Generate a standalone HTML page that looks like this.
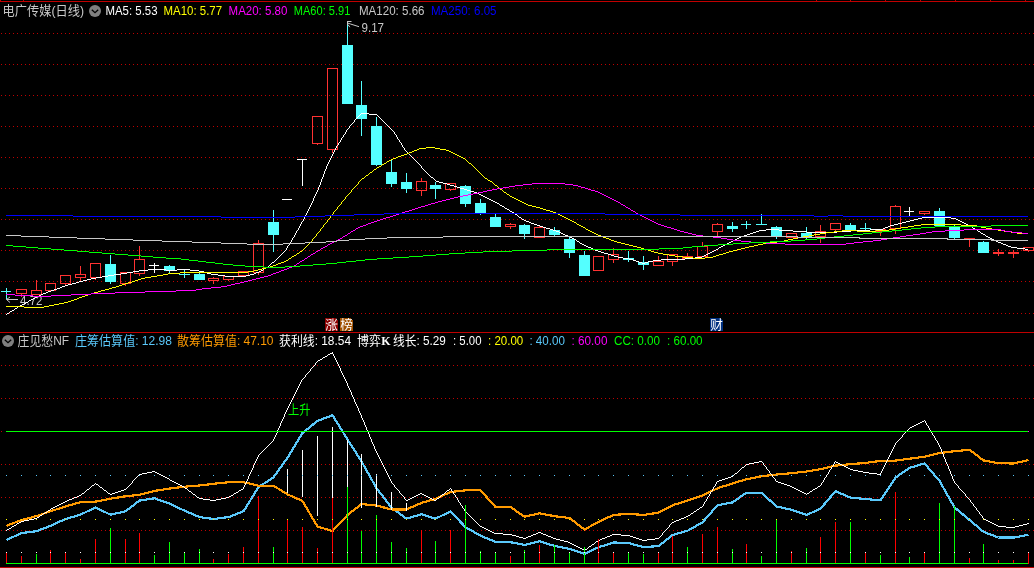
<!DOCTYPE html>
<html lang="zh-CN">
<head>
<meta charset="utf-8">
<title>电广传媒(日线)</title>
<style>
html,body{margin:0;padding:0;background:#000;overflow:hidden}
body{width:1034px;height:568px}
svg{display:block;will-change:transform}
text{font-family:"Liberation Sans","Noto Sans CJK SC",sans-serif;font-size:12.6px;font-weight:400}
.cj{font-family:"Liberation Sans","Noto Sans CJK SC",sans-serif}
.k{font-family:"Liberation Serif",serif;font-weight:700}
</style>
</head>
<body>
<svg width="1034" height="568" viewBox="0 0 1034 568" shape-rendering="crispEdges">
<rect x="0" y="0" width="1034" height="568" fill="#000"/>
<rect x="0" y="1" width="1034" height="1" fill="#c00000"/>
<rect x="0" y="0" width="1" height="1" fill="#c00000"/>
<rect x="23" y="0" width="1" height="1" fill="#c00000"/>
<rect x="816" y="0" width="1" height="1" fill="#c00000"/>
<rect x="850" y="0" width="1" height="1" fill="#c00000"/>
<rect x="885" y="0" width="1" height="1" fill="#c00000"/>
<rect x="920" y="0" width="1" height="1" fill="#c00000"/>
<rect x="955" y="0" width="1" height="1" fill="#c00000"/>
<rect x="990" y="0" width="1" height="1" fill="#c00000"/>
<rect x="1025" y="0" width="1" height="1" fill="#c00000"/>
<rect x="0" y="332" width="1034" height="1" fill="#c00000"/>
<rect x="0" y="567" width="1034" height="1" fill="#c00000"/>
<line x1="1" y1="33.5" x2="1034" y2="33.5" stroke="#c00000" stroke-width="1" stroke-dasharray="1 3"/>
<line x1="1" y1="64.5" x2="1034" y2="64.5" stroke="#c00000" stroke-width="1" stroke-dasharray="1 3"/>
<line x1="1" y1="95.5" x2="1034" y2="95.5" stroke="#c00000" stroke-width="1" stroke-dasharray="1 3"/>
<line x1="1" y1="126.5" x2="1034" y2="126.5" stroke="#c00000" stroke-width="1" stroke-dasharray="1 3"/>
<line x1="1" y1="157.5" x2="1034" y2="157.5" stroke="#c00000" stroke-width="1" stroke-dasharray="1 3"/>
<line x1="1" y1="188.5" x2="1034" y2="188.5" stroke="#c00000" stroke-width="1" stroke-dasharray="1 3"/>
<line x1="1" y1="219.5" x2="1034" y2="219.5" stroke="#c00000" stroke-width="1" stroke-dasharray="1 3"/>
<line x1="1" y1="250.5" x2="1034" y2="250.5" stroke="#c00000" stroke-width="1" stroke-dasharray="1 3"/>
<line x1="1" y1="281.5" x2="1034" y2="281.5" stroke="#c00000" stroke-width="1" stroke-dasharray="1 3"/>
<line x1="1" y1="313.5" x2="1034" y2="313.5" stroke="#c00000" stroke-width="1" stroke-dasharray="1 3"/>
<line x1="1" y1="365.5" x2="1034" y2="365.5" stroke="#c00000" stroke-width="1" stroke-dasharray="1 3"/>
<line x1="1" y1="398.5" x2="1034" y2="398.5" stroke="#c00000" stroke-width="1" stroke-dasharray="1 3"/>
<line x1="1" y1="464.5" x2="1034" y2="464.5" stroke="#c00000" stroke-width="1" stroke-dasharray="1 3"/>
<line x1="1" y1="497.5" x2="1034" y2="497.5" stroke="#c00000" stroke-width="1" stroke-dasharray="1 3"/>
<line x1="1" y1="530.5" x2="1034" y2="530.5" stroke="#c00000" stroke-width="1" stroke-dasharray="1 3"/>
<rect x="6" y="288" width="1" height="11" fill="#54ffff"/>
<rect x="1" y="291" width="10" height="1" fill="#54ffff"/>
<rect x="21" y="293" width="1" height="4" fill="#ff3232"/>
<rect x="16.5" y="289.5" width="10" height="4" fill="none" stroke="#ff3232" stroke-width="1"/>
<rect x="36" y="280" width="1" height="11" fill="#ff3232"/>
<rect x="31.5" y="290.5" width="10" height="4" fill="none" stroke="#ff3232" stroke-width="1"/>
<rect x="45.5" y="283.5" width="10" height="7" fill="none" stroke="#ff3232" stroke-width="1"/>
<rect x="65" y="283" width="1" height="2" fill="#ff3232"/>
<rect x="60.5" y="275.5" width="10" height="8" fill="none" stroke="#ff3232" stroke-width="1"/>
<rect x="80" y="266" width="1" height="9" fill="#ff3232"/>
<rect x="80" y="277" width="1" height="4" fill="#ff3232"/>
<rect x="75.5" y="274.5" width="10" height="3" fill="none" stroke="#ff3232" stroke-width="1"/>
<rect x="95" y="277" width="1" height="3" fill="#ff3232"/>
<rect x="90.5" y="263.5" width="10" height="14" fill="none" stroke="#ff3232" stroke-width="1"/>
<rect x="110" y="255" width="1" height="29" fill="#54ffff"/>
<rect x="105" y="264" width="11" height="18" fill="#54ffff"/>
<rect x="125" y="283" width="1" height="3" fill="#ff3232"/>
<rect x="120.5" y="272.5" width="10" height="11" fill="none" stroke="#ff3232" stroke-width="1"/>
<rect x="139" y="246" width="1" height="14" fill="#ff3232"/>
<rect x="139" y="273" width="1" height="3" fill="#ff3232"/>
<rect x="134.5" y="259.5" width="10" height="14" fill="none" stroke="#ff3232" stroke-width="1"/>
<rect x="154" y="263" width="1" height="10" fill="#ffffff"/>
<rect x="149" y="265" width="10" height="1" fill="#ffffff"/>
<rect x="169" y="265" width="1" height="9" fill="#54ffff"/>
<rect x="164" y="266" width="11" height="5" fill="#54ffff"/>
<rect x="184" y="270" width="1" height="8" fill="#54ffff"/>
<rect x="179" y="274" width="11" height="1" fill="#54ffff"/>
<rect x="199" y="271" width="1" height="9" fill="#54ffff"/>
<rect x="194" y="274" width="11" height="6" fill="#54ffff"/>
<rect x="213" y="277" width="1" height="2" fill="#ff3232"/>
<rect x="213" y="280" width="1" height="4" fill="#ff3232"/>
<rect x="208.5" y="278.5" width="10" height="2" fill="none" stroke="#ff3232" stroke-width="1"/>
<rect x="228" y="279" width="1" height="2" fill="#ff3232"/>
<rect x="223.5" y="276.5" width="10" height="3" fill="none" stroke="#ff3232" stroke-width="1"/>
<rect x="238.5" y="271.5" width="10" height="4" fill="none" stroke="#ff3232" stroke-width="1"/>
<rect x="258" y="240" width="1" height="4" fill="#ff3232"/>
<rect x="258" y="272" width="1" height="3" fill="#ff3232"/>
<rect x="253.5" y="243.5" width="10" height="29" fill="none" stroke="#ff3232" stroke-width="1"/>
<rect x="273" y="210" width="1" height="42" fill="#54ffff"/>
<rect x="268" y="222" width="11" height="13" fill="#54ffff"/>
<rect x="287" y="199" width="1" height="1" fill="#ffffff"/>
<rect x="282" y="199" width="10" height="1" fill="#ffffff"/>
<rect x="302" y="159" width="1" height="27" fill="#ffffff"/>
<rect x="297" y="159" width="10" height="1" fill="#ffffff"/>
<rect x="317" y="143" width="1" height="2" fill="#ff3232"/>
<rect x="312.5" y="116.5" width="10" height="27" fill="none" stroke="#ff3232" stroke-width="1"/>
<rect x="332" y="149" width="1" height="4" fill="#ff3232"/>
<rect x="327.5" y="68.5" width="10" height="81" fill="none" stroke="#ff3232" stroke-width="1"/>
<rect x="347" y="25" width="1" height="79" fill="#54ffff"/>
<rect x="342" y="45" width="11" height="59" fill="#54ffff"/>
<rect x="361" y="81" width="1" height="55" fill="#54ffff"/>
<rect x="356" y="105" width="11" height="14" fill="#54ffff"/>
<rect x="376" y="117" width="1" height="49" fill="#54ffff"/>
<rect x="371" y="126" width="11" height="39" fill="#54ffff"/>
<rect x="391" y="160" width="1" height="27" fill="#54ffff"/>
<rect x="386" y="172" width="11" height="12" fill="#54ffff"/>
<rect x="406" y="173" width="1" height="20" fill="#54ffff"/>
<rect x="401" y="182" width="11" height="7" fill="#54ffff"/>
<rect x="421" y="178" width="1" height="4" fill="#ff3232"/>
<rect x="421" y="190" width="1" height="6" fill="#ff3232"/>
<rect x="416.5" y="181.5" width="10" height="9" fill="none" stroke="#ff3232" stroke-width="1"/>
<rect x="435" y="182" width="1" height="17" fill="#54ffff"/>
<rect x="430" y="185" width="11" height="4" fill="#54ffff"/>
<rect x="450" y="189" width="1" height="2" fill="#ff3232"/>
<rect x="445.5" y="183.5" width="10" height="6" fill="none" stroke="#ff3232" stroke-width="1"/>
<rect x="465" y="185" width="1" height="22" fill="#54ffff"/>
<rect x="460" y="186" width="11" height="18" fill="#54ffff"/>
<rect x="480" y="199" width="1" height="16" fill="#54ffff"/>
<rect x="475" y="203" width="11" height="10" fill="#54ffff"/>
<rect x="495" y="214" width="1" height="13" fill="#54ffff"/>
<rect x="490" y="217" width="11" height="10" fill="#54ffff"/>
<rect x="510" y="223" width="1" height="2" fill="#ff3232"/>
<rect x="510" y="226" width="1" height="3" fill="#ff3232"/>
<rect x="505.5" y="224.5" width="10" height="2" fill="none" stroke="#ff3232" stroke-width="1"/>
<rect x="524" y="224" width="1" height="15" fill="#54ffff"/>
<rect x="519" y="225" width="11" height="9" fill="#54ffff"/>
<rect x="539" y="225" width="1" height="3" fill="#ff3232"/>
<rect x="534.5" y="227.5" width="10" height="10" fill="none" stroke="#ff3232" stroke-width="1"/>
<rect x="554" y="227" width="1" height="10" fill="#54ffff"/>
<rect x="549" y="230" width="11" height="5" fill="#54ffff"/>
<rect x="569" y="237" width="1" height="21" fill="#54ffff"/>
<rect x="564" y="239" width="11" height="14" fill="#54ffff"/>
<rect x="584" y="251" width="1" height="25" fill="#54ffff"/>
<rect x="579" y="255" width="11" height="21" fill="#54ffff"/>
<rect x="593.5" y="256.5" width="10" height="14" fill="none" stroke="#ff3232" stroke-width="1"/>
<rect x="613" y="248" width="1" height="7" fill="#ff3232"/>
<rect x="613" y="259" width="1" height="4" fill="#ff3232"/>
<rect x="608.5" y="254.5" width="10" height="5" fill="none" stroke="#ff3232" stroke-width="1"/>
<rect x="628" y="251" width="1" height="11" fill="#54ffff"/>
<rect x="623" y="258" width="11" height="2" fill="#54ffff"/>
<rect x="643" y="256" width="1" height="14" fill="#54ffff"/>
<rect x="638" y="262" width="11" height="3" fill="#54ffff"/>
<rect x="658" y="256" width="1" height="6" fill="#ff3232"/>
<rect x="653.5" y="261.5" width="10" height="4" fill="none" stroke="#ff3232" stroke-width="1"/>
<rect x="672" y="261" width="1" height="5" fill="#ff3232"/>
<rect x="667.5" y="254.5" width="10" height="7" fill="none" stroke="#ff3232" stroke-width="1"/>
<rect x="687" y="253" width="1" height="4" fill="#ff3232"/>
<rect x="682.5" y="256.5" width="10" height="2" fill="none" stroke="#ff3232" stroke-width="1"/>
<rect x="702" y="242" width="1" height="5" fill="#ff3232"/>
<rect x="697.5" y="246.5" width="10" height="10" fill="none" stroke="#ff3232" stroke-width="1"/>
<rect x="717" y="223" width="1" height="2" fill="#ff3232"/>
<rect x="717" y="231" width="1" height="5" fill="#ff3232"/>
<rect x="712.5" y="224.5" width="10" height="7" fill="none" stroke="#ff3232" stroke-width="1"/>
<rect x="732" y="222" width="1" height="10" fill="#54ffff"/>
<rect x="727" y="226" width="11" height="3" fill="#54ffff"/>
<rect x="746" y="221" width="1" height="8" fill="#54ffff"/>
<rect x="741" y="224" width="10" height="1" fill="#54ffff"/>
<rect x="761" y="214" width="1" height="11" fill="#54ffff"/>
<rect x="756" y="224" width="11" height="1" fill="#54ffff"/>
<rect x="776" y="226" width="1" height="13" fill="#54ffff"/>
<rect x="771" y="227" width="11" height="9" fill="#54ffff"/>
<rect x="786.5" y="233.5" width="10" height="4" fill="none" stroke="#ff3232" stroke-width="1"/>
<rect x="806" y="227" width="1" height="13" fill="#54ffff"/>
<rect x="801" y="233" width="11" height="5" fill="#54ffff"/>
<rect x="820" y="225" width="1" height="7" fill="#ff3232"/>
<rect x="820" y="236" width="1" height="7" fill="#ff3232"/>
<rect x="815.5" y="231.5" width="10" height="5" fill="none" stroke="#ff3232" stroke-width="1"/>
<rect x="835" y="229" width="1" height="3" fill="#ff3232"/>
<rect x="830.5" y="223.5" width="10" height="6" fill="none" stroke="#ff3232" stroke-width="1"/>
<rect x="850" y="223" width="1" height="7" fill="#54ffff"/>
<rect x="845" y="225" width="11" height="5" fill="#54ffff"/>
<rect x="865" y="223" width="1" height="8" fill="#54ffff"/>
<rect x="860" y="228" width="11" height="1" fill="#54ffff"/>
<rect x="880" y="231" width="1" height="5" fill="#ff3232"/>
<rect x="875.5" y="229.5" width="10" height="2" fill="none" stroke="#ff3232" stroke-width="1"/>
<rect x="895" y="205" width="1" height="2" fill="#ff3232"/>
<rect x="895" y="228" width="1" height="6" fill="#ff3232"/>
<rect x="890.5" y="206.5" width="10" height="22" fill="none" stroke="#ff3232" stroke-width="1"/>
<rect x="909" y="207" width="1" height="9" fill="#ffffff"/>
<rect x="904" y="211" width="10" height="1" fill="#ffffff"/>
<rect x="924" y="213" width="1" height="2" fill="#ff3232"/>
<rect x="919.5" y="211.5" width="10" height="2" fill="none" stroke="#ff3232" stroke-width="1"/>
<rect x="939" y="208" width="1" height="19" fill="#54ffff"/>
<rect x="934" y="211" width="11" height="15" fill="#54ffff"/>
<rect x="954" y="224" width="1" height="15" fill="#54ffff"/>
<rect x="949" y="226" width="11" height="12" fill="#54ffff"/>
<rect x="969" y="238" width="1" height="9" fill="#ff3232"/>
<rect x="964" y="238" width="11" height="1" fill="#ff3232"/>
<rect x="983" y="241" width="1" height="12" fill="#54ffff"/>
<rect x="978" y="242" width="11" height="11" fill="#54ffff"/>
<rect x="998" y="249" width="1" height="7" fill="#ff3232"/>
<rect x="993" y="252" width="11" height="2" fill="#ff3232"/>
<rect x="1013" y="250" width="1" height="8" fill="#ff3232"/>
<rect x="1008" y="252" width="11" height="2" fill="#ff3232"/>
<rect x="1028" y="250" width="1" height="2" fill="#ff3232"/>
<rect x="1023.5" y="247.5" width="10" height="3" fill="none" stroke="#ff3232" stroke-width="1"/>
<text x="361.5" y="32.4" fill="#c8c8c8" class="t" textLength="22.5" lengthAdjust="spacingAndGlyphs">9.17</text>
<path d="M347.5 21v4M347.5 23l3 1 8.5 2.7M347 21.5h4.5M348 24.5l1.8 2.7" fill="none" stroke="#c8c8c8" stroke-width="1" shape-rendering="auto"/>
<text x="20" y="305.3" fill="#c8c8c8" class="t" textLength="22.5" lengthAdjust="spacingAndGlyphs">4.72</text>
<path d="M6.5 299.5h11.5M6.5 299.5l3.5 -2.5M6.5 299.5l3.5 3" fill="none" stroke="#c8c8c8" stroke-width="1" shape-rendering="auto"/>
<path d="M361 113.5h8M369 114.5h8M431 177.5h2M436 181.5h3M439 182.5h4M443 183.5h4M447 184.5h3M450 185.5h4M454 186.5h3M457 187.5h3M460 188.5h4M464 189.5h3M467 190.5h3M470 191.5h4M474 192.5h3M477 193.5h2M479 194.5h2M481 195.5h2M483 196.5h2M485 197.5h2M487 198.5h2M489 199.5h2M491 200.5h2M493 201.5h2M495 202.5h2M497 203.5h2M500 205.5h2M502 206.5h2M505 208.5h2M507 209.5h2M510 211.5h2M512 212.5h2M515 214.5h2M519 217.5h2M922 217.5h29M918 218.5h4M951 218.5h5M522 219.5h2M914 219.5h4M956 219.5h2M524 220.5h2M910 220.5h4M958 220.5h2M526 221.5h3M906 221.5h4M960 221.5h2M529 222.5h2M902 222.5h4M962 222.5h2M531 223.5h3M898 223.5h4M964 223.5h2M534 224.5h3M894 224.5h4M966 224.5h2M537 225.5h3M890 225.5h4M968 225.5h2M540 226.5h3M888 226.5h2M970 226.5h2M543 227.5h3M885 227.5h3M546 228.5h4M883 228.5h2M973 228.5h2M550 229.5h3M766 229.5h13M870 229.5h13M975 229.5h2M553 230.5h3M759 230.5h7M779 230.5h14M851 230.5h19M556 231.5h3M756 231.5h3M793 231.5h14M837 231.5h14M978 231.5h2M559 232.5h2M753 232.5h3M807 232.5h30M561 233.5h2M750 233.5h3M981 233.5h2M563 234.5h2M747 234.5h3M983 234.5h2M565 235.5h3M744 235.5h3M568 236.5h2M741 236.5h3M986 236.5h2M570 237.5h2M739 237.5h2M988 237.5h2M572 238.5h2M737 238.5h2M990 238.5h2M574 239.5h2M735 239.5h2M992 239.5h2M733 240.5h2M994 240.5h2M577 241.5h2M731 241.5h2M996 241.5h2M729 242.5h2M998 242.5h3M580 243.5h2M727 243.5h2M1001 243.5h2M582 244.5h2M725 244.5h2M1003 244.5h3M584 245.5h2M723 245.5h2M1006 245.5h2M586 246.5h2M721 246.5h2M1008 246.5h3M588 247.5h3M719 247.5h2M1011 247.5h6M591 248.5h2M1017 248.5h8M593 249.5h2M716 249.5h2M1025 249.5h3M595 250.5h3M714 250.5h2M598 251.5h3M712 251.5h2M601 252.5h3M710 252.5h2M604 253.5h4M708 253.5h2M608 254.5h3M706 254.5h2M611 255.5h3M704 255.5h2M614 256.5h4M702 256.5h2M618 257.5h5M695 257.5h7M623 258.5h6M685 258.5h10M629 259.5h4M661 259.5h24M633 260.5h3M653 260.5h8M636 261.5h3M648 261.5h5M272 262.5h2M639 262.5h3M645 262.5h3M642 263.5h3M266 267.5h2M264 268.5h2M148 269.5h18M177 269.5h13M139 270.5h9M166 270.5h11M190 270.5h9M261 270.5h2M133 271.5h6M199 271.5h5M259 271.5h2M127 272.5h6M204 272.5h3M256 272.5h3M121 273.5h6M207 273.5h4M254 273.5h2M114 274.5h7M211 274.5h7M250 274.5h4M108 275.5h6M218 275.5h7M246 275.5h4M102 276.5h6M225 276.5h21M96 277.5h6M91 278.5h5M87 279.5h4M83 280.5h4M79 281.5h4M76 282.5h3M72 283.5h4M68 284.5h4M65 285.5h3M62 286.5h3M60 287.5h2M57 288.5h3M54 289.5h3M51 290.5h3M48 291.5h3M46 292.5h2M43 293.5h3M41 294.5h2M39 295.5h2M37 296.5h2M35 297.5h2M33 298.5h2M31 299.5h2M29 300.5h2M26 302.5h2M24 303.5h2M22 304.5h2M20 305.5h2M18 306.5h2M15 308.5h2M12 310.5h2M10 311.5h2M7 313.5h2M6.5 314v1M9.5 312v1M14.5 309v1M17.5 307v1M28.5 301v1M263.5 269v1M268.5 266v1M269.5 265v1M270.5 264v1M271.5 263v1M274.5 261v1M275.5 260v1M276.5 259v1M277.5 258v1M278.5 257v1M279.5 256v1M280.5 255v1M281.5 254v1M282.5 253v1M283.5 252v1M284.5 251v1M285.5 250v1M286.5 248v2M287.5 246v2M288.5 245v1M289.5 243v2M290.5 242v1M291.5 240v2M292.5 238v2M293.5 237v1M294.5 235v2M295.5 233v2M296.5 231v2M297.5 230v1M298.5 228v2M299.5 226v2M300.5 224v2M301.5 222v2M302.5 221v1M303.5 219v2M304.5 217v2M305.5 215v2M306.5 213v2M307.5 211v2M308.5 209v2M309.5 207v2M310.5 205v2M311.5 203v2M312.5 201v2M313.5 198v3M314.5 196v2M315.5 194v2M316.5 192v2M317.5 190v2M318.5 187v3M319.5 185v2M320.5 182v3M321.5 179v3M322.5 177v2M323.5 174v3M324.5 171v3M325.5 169v2M326.5 166v3M327.5 164v2M328.5 162v2M329.5 160v2M330.5 158v2M331.5 156v2M332.5 154v2M333.5 152v2M334.5 150v2M335.5 148v2M336.5 146v2M337.5 145v1M338.5 143v2M339.5 142v1M340.5 140v2M341.5 138v2M342.5 137v1M343.5 135v2M344.5 134v1M345.5 132v2M346.5 130v2M347.5 129v1M348.5 128v1M349.5 126v2M350.5 125v1M351.5 124v1M352.5 123v1M353.5 122v1M354.5 120v2M355.5 119v1M356.5 118v1M357.5 117v1M358.5 116v1M359.5 115v1M360.5 114v1M377.5 115v1M378.5 116v1M379.5 117v1M380.5 118v1M381.5 119v1M382.5 120v1M383.5 121v1M384.5 122v1M385.5 123v1M386.5 124v1M387.5 125v1M388.5 126v1M389.5 127v1M390.5 128v1M391.5 129v1M392.5 130v1M393.5 131v1M394.5 132v2M395.5 134v1M396.5 135v2M397.5 137v2M398.5 139v1M399.5 140v2M400.5 142v1M401.5 143v2M402.5 145v2M403.5 147v1M404.5 148v2M405.5 150v1M406.5 151v1M407.5 152v1M408.5 153v1M409.5 154v1M410.5 155v1M411.5 156v1M412.5 157v1M413.5 158v1M414.5 159v1M415.5 160v1M416.5 161v1M417.5 162v1M418.5 163v1M419.5 164v1M420.5 165v1M421.5 166v2M422.5 168v1M423.5 169v1M424.5 170v1M425.5 171v1M426.5 172v1M427.5 173v1M428.5 174v1M429.5 175v1M430.5 176v1M433.5 178v1M434.5 179v1M435.5 180v1M499.5 204v1M504.5 207v1M509.5 210v1M514.5 213v1M517.5 215v1M518.5 216v1M521.5 218v1M576.5 240v1M579.5 242v1M718.5 248v1M972.5 227v1M977.5 230v1M980.5 232v1M985.5 235v1" fill="none" stroke="#ffffff" stroke-width="1"/>
<path d="M426 147.5h9M419 148.5h7M435 148.5h5M417 149.5h2M440 149.5h6M414 150.5h3M446 150.5h3M412 151.5h2M449 151.5h2M409 152.5h3M451 152.5h2M407 153.5h2M453 153.5h2M404 154.5h3M455 154.5h2M401 155.5h3M457 155.5h2M398 156.5h3M459 156.5h2M396 157.5h2M461 157.5h2M393 158.5h3M463 158.5h2M391 159.5h2M389 160.5h2M387 161.5h2M384 163.5h2M469 163.5h2M382 164.5h2M379 166.5h2M377 167.5h2M374 169.5h2M370 172.5h2M366 175.5h2M362 178.5h2M485 178.5h2M488 180.5h2M490 181.5h2M495 185.5h2M500 189.5h2M504 192.5h2M507 194.5h2M510 196.5h2M512 197.5h2M514 198.5h2M516 199.5h2M518 200.5h2M520 201.5h2M522 202.5h2M524 203.5h2M526 204.5h2M528 205.5h4M532 206.5h4M536 207.5h4M540 208.5h3M543 209.5h3M546 210.5h4M550 211.5h3M553 212.5h3M556 213.5h2M558 214.5h2M560 215.5h2M562 216.5h2M564 217.5h2M566 218.5h2M568 219.5h2M570 220.5h2M572 221.5h2M574 222.5h2M577 224.5h2M921 224.5h40M579 225.5h2M914 225.5h7M961 225.5h16M581 226.5h2M908 226.5h6M977 226.5h4M583 227.5h2M901 227.5h7M981 227.5h5M895 228.5h6M986 228.5h6M586 229.5h2M889 229.5h6M992 229.5h6M588 230.5h2M842 230.5h15M876 230.5h13M998 230.5h6M590 231.5h2M834 231.5h8M857 231.5h19M1004 231.5h7M592 232.5h2M826 232.5h8M1011 232.5h6M594 233.5h2M820 233.5h6M1017 233.5h11M596 234.5h2M814 234.5h6M598 235.5h3M809 235.5h5M601 236.5h2M803 236.5h6M603 237.5h3M798 237.5h5M606 238.5h3M793 238.5h5M609 239.5h2M788 239.5h5M611 240.5h3M784 240.5h4M614 241.5h3M777 241.5h7M617 242.5h4M769 242.5h8M621 243.5h4M763 243.5h6M625 244.5h4M758 244.5h5M629 245.5h4M754 245.5h4M633 246.5h4M749 246.5h5M637 247.5h4M745 247.5h4M641 248.5h3M741 248.5h4M644 249.5h4M737 249.5h4M648 250.5h3M733 250.5h4M300 251.5h2M651 251.5h3M729 251.5h4M654 252.5h4M726 252.5h3M297 253.5h2M658 253.5h5M723 253.5h3M663 254.5h6M719 254.5h4M294 255.5h2M669 255.5h6M716 255.5h3M292 256.5h2M675 256.5h8M713 256.5h3M683 257.5h10M705 257.5h8M289 258.5h2M693 258.5h12M286 260.5h2M284 261.5h2M281 262.5h3M278 263.5h3M276 264.5h2M273 265.5h3M270 266.5h3M266 267.5h4M262 268.5h4M258 269.5h4M254 270.5h4M248 271.5h6M180 272.5h68M168 273.5h12M163 274.5h5M157 275.5h6M151 276.5h6M145 277.5h6M141 278.5h4M138 279.5h3M135 280.5h3M132 281.5h3M128 282.5h4M125 283.5h3M122 284.5h3M119 285.5h3M116 286.5h3M112 287.5h4M109 288.5h3M105 289.5h4M101 290.5h4M98 291.5h3M94 292.5h4M91 293.5h3M88 294.5h3M85 295.5h3M82 296.5h3M79 297.5h3M77 298.5h2M74 299.5h3M71 300.5h3M68 301.5h3M64 302.5h4M59 303.5h5M54 304.5h5M49 305.5h5M6 306.5h18M44 306.5h5M24 307.5h20M288.5 259v1M291.5 257v1M296.5 254v1M299.5 252v1M302.5 250v1M303.5 249v1M304.5 248v1M305.5 247v1M306.5 246v1M307.5 245v1M308.5 244v1M309.5 243v1M310.5 242v1M311.5 241v1M312.5 239v2M313.5 238v1M314.5 237v1M315.5 236v1M316.5 234v2M317.5 233v1M318.5 232v1M319.5 231v1M320.5 229v2M321.5 228v1M322.5 227v1M323.5 225v2M324.5 224v1M325.5 223v1M326.5 222v1M327.5 220v2M328.5 219v1M329.5 218v1M330.5 216v2M331.5 215v1M332.5 214v1M333.5 212v2M334.5 211v1M335.5 210v1M336.5 209v1M337.5 207v2M338.5 206v1M339.5 205v1M340.5 204v1M341.5 202v2M342.5 201v1M343.5 200v1M344.5 199v1M345.5 197v2M346.5 196v1M347.5 195v1M348.5 194v1M349.5 193v1M350.5 192v1M351.5 190v2M352.5 189v1M353.5 188v1M354.5 187v1M355.5 186v1M356.5 185v1M357.5 184v1M358.5 182v2M359.5 181v1M360.5 180v1M361.5 179v1M364.5 177v1M365.5 176v1M368.5 174v1M369.5 173v1M372.5 171v1M373.5 170v1M376.5 168v1M381.5 165v1M386.5 162v1M465.5 159v1M466.5 160v1M467.5 161v1M468.5 162v1M471.5 164v1M472.5 165v1M473.5 166v1M474.5 167v1M475.5 168v1M476.5 169v1M477.5 170v1M478.5 171v1M479.5 172v1M480.5 173v1M481.5 174v1M482.5 175v1M483.5 176v1M484.5 177v1M487.5 179v1M492.5 182v1M493.5 183v1M494.5 184v1M497.5 186v1M498.5 187v1M499.5 188v1M502.5 190v1M503.5 191v1M506.5 193v1M509.5 195v1M576.5 223v1M585.5 228v1" fill="none" stroke="#ffff00" stroke-width="1"/>
<path d="M532 183.5h33M523 184.5h9M565 184.5h8M515 185.5h8M573 185.5h5M509 186.5h6M578 186.5h3M503 187.5h6M581 187.5h4M497 188.5h6M585 188.5h3M492 189.5h5M588 189.5h3M487 190.5h5M591 190.5h4M483 191.5h4M595 191.5h3M478 192.5h5M598 192.5h2M473 193.5h5M600 193.5h2M468 194.5h5M602 194.5h2M463 195.5h5M604 195.5h2M458 196.5h5M606 196.5h2M454 197.5h4M608 197.5h2M450 198.5h4M610 198.5h2M446 199.5h4M612 199.5h2M442 200.5h4M614 200.5h2M438 201.5h4M616 201.5h2M435 202.5h3M618 202.5h2M431 203.5h4M428 204.5h3M621 204.5h2M425 205.5h3M623 205.5h2M421 206.5h4M418 207.5h3M626 207.5h2M415 208.5h3M628 208.5h2M412 209.5h3M409 210.5h3M631 210.5h2M405 211.5h4M633 211.5h2M402 212.5h3M399 213.5h3M636 213.5h2M396 214.5h3M638 214.5h2M393 215.5h3M640 215.5h2M390 216.5h3M642 216.5h2M386 217.5h4M644 217.5h2M383 218.5h3M646 218.5h2M380 219.5h3M648 219.5h2M377 220.5h3M650 220.5h2M374 221.5h3M652 221.5h2M371 222.5h3M654 222.5h2M368 223.5h3M656 223.5h2M366 224.5h2M658 224.5h3M363 225.5h3M661 225.5h3M360 226.5h3M664 226.5h3M358 227.5h2M667 227.5h4M356 228.5h2M671 228.5h3M674 229.5h3M964 229.5h37M353 230.5h2M677 230.5h3M945 230.5h19M1001 230.5h4M351 231.5h2M680 231.5h4M932 231.5h13M1005 231.5h7M684 232.5h4M926 232.5h6M1012 232.5h10M348 233.5h2M688 233.5h4M920 233.5h6M1022 233.5h6M692 234.5h4M913 234.5h7M345 235.5h2M696 235.5h7M906 235.5h7M343 236.5h2M703 236.5h10M900 236.5h6M713 237.5h8M893 237.5h7M340 238.5h2M721 238.5h6M887 238.5h6M338 239.5h2M727 239.5h6M881 239.5h6M336 240.5h2M733 240.5h8M873 240.5h8M334 241.5h2M741 241.5h10M863 241.5h10M332 242.5h2M751 242.5h15M854 242.5h9M330 243.5h2M766 243.5h19M846 243.5h8M328 244.5h2M785 244.5h61M325 246.5h2M323 247.5h2M321 248.5h2M318 250.5h2M316 251.5h2M313 253.5h2M311 254.5h2M308 256.5h2M305 258.5h2M302 260.5h2M300 261.5h2M297 263.5h2M294 265.5h2M292 266.5h2M289 267.5h3M287 268.5h2M284 269.5h3M281 270.5h3M279 271.5h2M276 272.5h3M273 273.5h3M271 274.5h2M268 275.5h3M264 276.5h4M260 277.5h4M256 278.5h4M252 279.5h4M248 280.5h4M244 281.5h4M240 282.5h4M235 283.5h5M231 284.5h4M227 285.5h4M221 286.5h6M211 287.5h10M202 288.5h9M196 289.5h6M176 290.5h20M145 291.5h31M115 292.5h30M91 293.5h24M6 294.5h9M71 294.5h20M15 295.5h18M51 295.5h20M33 296.5h18M296.5 264v1M299.5 262v1M304.5 259v1M307.5 257v1M310.5 255v1M315.5 252v1M320.5 249v1M327.5 245v1M342.5 237v1M347.5 234v1M350.5 232v1M355.5 229v1M620.5 203v1M625.5 206v1M630.5 209v1M635.5 212v1" fill="none" stroke="#ff00ff" stroke-width="1"/>
<path d="M991 225.5h37M935 226.5h56M921 227.5h14M911 228.5h10M902 229.5h9M892 230.5h10M882 231.5h10M872 232.5h10M863 233.5h9M853 234.5h10M844 235.5h9M834 236.5h10M825 237.5h9M817 238.5h8M805 239.5h12M791 240.5h14M770 241.5h21M749 242.5h21M733 243.5h16M718 244.5h15M6 245.5h7M704 245.5h14M13 246.5h13M692 246.5h12M26 247.5h12M683 247.5h9M38 248.5h13M659 248.5h24M51 249.5h13M547 249.5h112M64 250.5h13M512 250.5h35M77 251.5h12M483 251.5h29M89 252.5h13M465 252.5h18M102 253.5h13M449 253.5h16M115 254.5h13M436 254.5h13M128 255.5h13M423 255.5h13M141 256.5h12M409 256.5h14M153 257.5h13M393 257.5h16M166 258.5h15M377 258.5h16M181 259.5h8M365 259.5h12M189 260.5h9M356 260.5h9M198 261.5h8M346 261.5h10M206 262.5h9M337 262.5h9M215 263.5h8M326 263.5h11M223 264.5h10M313 264.5h13M233 265.5h12M300 265.5h13M245 266.5h19M285 266.5h15M264 267.5h21" fill="none" stroke="#00ff00" stroke-width="1"/>
<path d="M6 235.5h15M21 236.5h28M443 236.5h355M49 237.5h28M387 237.5h56M797 237.5h63M77 238.5h28M365 238.5h22M859 238.5h89M105 239.5h28M349 239.5h16M947 239.5h45M133 240.5h29M337 240.5h12M991 240.5h37M162 241.5h30M326 241.5h11M192 242.5h29M305 242.5h21M221 243.5h26M283 243.5h22M247 244.5h36" fill="none" stroke="#c8c8c8" stroke-width="1"/>
<path d="M384 213.5h221M354 214.5h30M605 214.5h75M6 215.5h67M325 215.5h29M680 215.5h134M828 215.5h15M73 216.5h148M295 216.5h30M814 216.5h14M843 216.5h185M221 217.5h74" fill="none" stroke="#0000ff" stroke-width="1"/>
<polyline points="6.5,539.9 21.5,533.1 36.5,531.2 50.5,525.8 65.5,519.0 80.5,514.7 95.5,507.4 110.5,514.7 125.5,511.3 139.5,500.6 154.5,498.3 169.5,503.5 184.5,510.7 199.5,517.1 213.5,519.0 228.5,517.1 243.5,511.3 258.5,487.1 273.5,477.3 287.5,457.7 302.5,433.0 317.5,420.9 332.5,415.3 347.5,439.4 361.5,461.4 376.5,488.1 391.5,507.6 406.5,518.6 421.5,514.3 435.5,518.7 450.5,511.4 465.5,527.2 480.5,535.7 495.5,541.8 510.5,542.2 524.5,544.9 539.5,541.3 554.5,545.9 569.5,549.0 584.5,553.9 598.5,547.3 613.5,542.5 628.5,543.0 643.5,547.1 658.5,546.1 672.5,535.0 687.5,530.8 702.5,522.3 717.5,505.3 732.5,502.4 746.5,492.7 761.5,492.7 776.5,506.5 791.5,509.7 806.5,515.0 820.5,508.7 835.5,491.2 850.5,497.6 865.5,499.0 880.5,500.4 895.5,477.6 909.5,467.9 924.5,463.4 939.5,480.9 954.5,507.4 969.5,519.9 983.5,531.9 998.5,537.5 1013.5,537.6 1028.5,534.8" fill="none" stroke="#5ac8fa" stroke-width="2.2" stroke-linejoin="round" />
<polyline points="6.5,525.8 21.5,520.0 36.5,516.1 50.5,511.3 65.5,506.4 80.5,502.2 95.5,501.6 110.5,498.7 125.5,496.3 139.5,494.8 154.5,490.9 169.5,488.6 184.5,486.7 199.5,485.5 213.5,483.8 228.5,482.2 243.5,482.2 258.5,485.7 273.5,485.7 287.5,494.4 302.5,501.0 317.5,526.6 332.5,531.0 347.5,515.0 361.5,504.0 376.5,505.6 391.5,509.4 406.5,509.4 421.5,502.9 435.5,498.8 450.5,492.0 465.5,490.3 480.5,490.3 495.5,507.0 510.5,507.0 524.5,516.7 539.5,513.3 554.5,516.2 569.5,518.0 584.5,529.6 598.5,521.8 613.5,515.0 628.5,513.8 643.5,515.0 658.5,512.6 672.5,505.3 687.5,500.5 702.5,495.6 717.5,488.3 732.5,483.4 746.5,479.3 761.5,476.2 776.5,474.5 791.5,473.2 806.5,471.5 820.5,469.2 835.5,465.6 850.5,464.2 865.5,462.9 880.5,460.9 895.5,460.6 909.5,458.7 924.5,456.7 939.5,453.1 954.5,451.2 969.5,449.8 983.5,460.4 998.5,463.2 1013.5,463.5 1028.5,460.1" fill="none" stroke="#ff9a00" stroke-width="2.2" stroke-linejoin="round" />
<path d="M330 353.5h3M328 354.5h2M325 356.5h2M323 357.5h2M320 359.5h2M318 360.5h2M922 421.5h2M920 422.5h2M918 423.5h2M916 424.5h2M914 425.5h2M912 426.5h2M910 427.5h2M759 461.5h3M754 462.5h5M836 462.5h2M749 463.5h5M838 463.5h2M746 464.5h3M840 464.5h2M842 465.5h2M844 466.5h2M742 467.5h2M846 467.5h2M848 468.5h2M850 469.5h3M853 470.5h5M152 471.5h3M858 471.5h5M147 472.5h5M155 472.5h2M863 472.5h6M142 473.5h5M157 473.5h2M735 473.5h2M869 473.5h8M139 474.5h3M159 474.5h2M877 474.5h4M161 475.5h2M163 476.5h2M731 476.5h2M165 477.5h2M728 477.5h3M167 478.5h2M725 478.5h3M722 479.5h3M170 480.5h2M719 480.5h3M172 481.5h2M717 481.5h2M776 481.5h2M174 482.5h2M778 482.5h3M176 483.5h2M781 483.5h3M96 484.5h2M178 484.5h2M784 484.5h3M92 485.5h2M180 485.5h2M787 485.5h3M182 486.5h2M790 486.5h2M818 486.5h2M100 487.5h2M792 487.5h2M185 488.5h2M794 488.5h2M815 488.5h2M87 489.5h2M124 489.5h2M241 489.5h2M796 489.5h2M813 489.5h2M104 490.5h2M121 490.5h3M239 490.5h2M447 490.5h2M798 490.5h2M118 491.5h3M189 491.5h2M800 491.5h2M810 491.5h2M115 492.5h3M236 492.5h2M802 492.5h2M82 493.5h2M108 493.5h2M112 493.5h3M234 493.5h2M420 493.5h2M804 493.5h2M807 493.5h2M110 494.5h2M193 494.5h2M418 494.5h2M422 494.5h2M442 494.5h2M79 495.5h2M231 495.5h2M416 495.5h2M424 495.5h2M77 496.5h2M229 496.5h2M414 496.5h2M426 496.5h2M74 497.5h3M197 497.5h2M226 497.5h3M412 497.5h2M428 497.5h2M72 498.5h2M199 498.5h4M221 498.5h5M410 498.5h2M430 498.5h2M437 498.5h2M69 499.5h3M203 499.5h7M216 499.5h5M408 499.5h2M432 499.5h2M67 500.5h2M210 500.5h6M406 500.5h2M434 500.5h2M65 501.5h2M63 502.5h2M61 503.5h2M59 504.5h2M57 505.5h2M55 506.5h2M53 507.5h2M700 507.5h2M51 508.5h2M697 509.5h2M48 510.5h2M694 511.5h2M45 512.5h2M43 513.5h2M691 513.5h2M40 515.5h2M688 515.5h2M686 516.5h2M37 517.5h2M684 517.5h2M34 518.5h3M681 518.5h3M29 519.5h5M679 519.5h2M984 519.5h2M24 520.5h5M676 520.5h3M986 520.5h2M21 521.5h3M674 521.5h2M988 521.5h2M19 522.5h2M672 522.5h2M990 522.5h2M17 523.5h2M992 523.5h2M1027 523.5h2M994 524.5h2M1023 524.5h4M14 525.5h2M996 525.5h2M1019 525.5h4M12 526.5h2M480 526.5h2M998 526.5h8M1015 526.5h4M482 527.5h2M1006 527.5h9M9 528.5h2M484 528.5h2M7 529.5h2M486 529.5h2M488 530.5h2M490 531.5h2M492 532.5h2M538 532.5h3M494 533.5h9M536 533.5h2M541 533.5h2M503 534.5h9M533 534.5h3M543 534.5h3M612 534.5h9M512 535.5h4M531 535.5h2M546 535.5h2M610 535.5h2M621 535.5h9M516 536.5h3M528 536.5h3M548 536.5h3M607 536.5h3M630 536.5h3M519 537.5h4M526 537.5h2M551 537.5h2M605 537.5h2M633 537.5h3M523 538.5h3M553 538.5h3M602 538.5h3M636 538.5h3M655 538.5h4M556 539.5h4M600 539.5h2M639 539.5h3M647 539.5h8M560 540.5h4M598 540.5h2M642 540.5h5M564 541.5h4M596 541.5h2M568 542.5h2M570 543.5h2M572 544.5h2M592 544.5h2M574 545.5h2M576 546.5h2M589 546.5h2M578 547.5h2M580 548.5h2M582 549.5h2M585 549.5h2M6.5 530v1M11.5 527v1M16.5 524v1M39.5 516v1M42.5 514v1M47.5 511v1M50.5 509v1M81.5 494v1M84.5 492v1M85.5 491v1M86.5 490v1M89.5 488v1M90.5 487v1M91.5 486v1M94.5 484v1M95.5 483v1M98.5 485v1M99.5 486v1M102.5 488v1M103.5 489v1M106.5 491v1M107.5 492v1M126.5 488v1M127.5 487v1M128.5 486v1M129.5 485v1M130.5 484v1M131.5 483v1M132.5 481v2M133.5 480v1M134.5 479v1M135.5 478v1M136.5 477v1M137.5 476v1M138.5 475v1M169.5 479v1M184.5 487v1M187.5 489v1M188.5 490v1M191.5 492v1M192.5 493v1M195.5 495v1M196.5 496v1M233.5 494v1M238.5 491v1M243.5 487v2M244.5 485v2M245.5 483v2M246.5 481v2M247.5 479v2M248.5 476v3M249.5 474v2M250.5 472v2M251.5 470v2M252.5 468v2M253.5 465v3M254.5 463v2M255.5 461v2M256.5 459v2M257.5 457v2M258.5 455v2M259.5 454v1M260.5 453v1M261.5 452v1M262.5 451v1M263.5 450v1M264.5 449v1M265.5 448v1M266.5 447v1M267.5 446v1M268.5 445v1M269.5 444v1M270.5 443v1M271.5 442v1M272.5 441v1M273.5 439v2M274.5 437v2M275.5 435v2M276.5 433v2M277.5 430v3M278.5 428v2M279.5 426v2M280.5 423v3M281.5 421v2M282.5 419v2M283.5 417v2M284.5 414v3M285.5 412v2M286.5 410v2M287.5 408v2M288.5 406v2M289.5 404v2M290.5 402v2M291.5 400v2M292.5 398v2M293.5 396v2M294.5 394v2M295.5 392v2M296.5 390v2M297.5 388v2M298.5 386v2M299.5 384v2M300.5 382v2M301.5 380v2M302.5 379v1M303.5 378v1M304.5 377v1M305.5 375v2M306.5 374v1M307.5 373v1M308.5 372v1M309.5 371v1M310.5 369v2M311.5 368v1M312.5 367v1M313.5 366v1M314.5 365v1M315.5 363v2M316.5 362v1M317.5 361v1M322.5 358v1M327.5 355v1M332.5 352v1M333.5 354v2M334.5 356v2M335.5 358v2M336.5 360v2M337.5 362v2M338.5 364v2M339.5 366v2M340.5 368v3M341.5 371v2M342.5 373v2M343.5 375v2M344.5 377v2M345.5 379v2M346.5 381v2M347.5 383v3M348.5 386v2M349.5 388v2M350.5 390v2M351.5 392v3M352.5 395v2M353.5 397v2M354.5 399v3M355.5 402v2M356.5 404v2M357.5 406v2M358.5 408v3M359.5 411v2M360.5 413v2M361.5 415v3M362.5 418v2M363.5 420v2M364.5 422v3M365.5 425v2M366.5 427v3M367.5 430v2M368.5 432v2M369.5 434v3M370.5 437v2M371.5 439v3M372.5 442v2M373.5 444v2M374.5 446v3M375.5 449v2M376.5 451v2M377.5 453v2M378.5 455v2M379.5 457v2M380.5 459v2M381.5 461v2M382.5 463v2M383.5 465v2M384.5 467v2M385.5 469v2M386.5 471v2M387.5 473v2M388.5 475v2M389.5 477v2M390.5 479v2M391.5 481v2M392.5 483v1M393.5 484v1M394.5 485v2M395.5 487v1M396.5 488v1M397.5 489v1M398.5 490v1M399.5 491v2M400.5 493v1M401.5 494v1M402.5 495v1M403.5 496v1M404.5 497v2M405.5 499v1M436.5 499v1M439.5 497v1M440.5 496v1M441.5 495v1M444.5 493v1M445.5 492v1M446.5 491v1M449.5 489v1M450.5 488v1M451.5 489v2M452.5 491v1M453.5 492v2M454.5 494v1M455.5 495v2M456.5 497v1M457.5 498v2M458.5 500v2M459.5 502v1M460.5 503v2M461.5 505v1M462.5 506v2M463.5 508v1M464.5 509v2M465.5 511v1M466.5 512v1M467.5 513v1M468.5 514v1M469.5 515v1M470.5 516v1M471.5 517v1M472.5 518v1M473.5 519v1M474.5 520v1M475.5 521v1M476.5 522v1M477.5 523v1M478.5 524v1M479.5 525v1M584.5 550v1M587.5 548v1M588.5 547v1M591.5 545v1M594.5 543v1M595.5 542v1M659.5 537v1M660.5 536v1M661.5 535v1M662.5 533v2M663.5 532v1M664.5 531v1M665.5 530v1M666.5 529v1M667.5 528v1M668.5 527v1M669.5 525v2M670.5 524v1M671.5 523v1M690.5 514v1M693.5 512v1M696.5 510v1M699.5 508v1M702.5 506v1M703.5 504v2M704.5 502v2M705.5 501v1M706.5 499v2M707.5 497v2M708.5 496v1M709.5 494v2M710.5 492v2M711.5 491v1M712.5 489v2M713.5 487v2M714.5 486v1M715.5 484v2M716.5 482v2M733.5 475v1M734.5 474v1M737.5 472v1M738.5 471v1M739.5 470v1M740.5 469v1M741.5 468v1M744.5 466v1M745.5 465v1M762.5 462v1M763.5 463v2M764.5 465v1M765.5 466v1M766.5 467v2M767.5 469v1M768.5 470v1M769.5 471v2M770.5 473v1M771.5 474v1M772.5 475v2M773.5 477v1M774.5 478v1M775.5 479v2M806.5 494v1M809.5 492v1M812.5 490v1M817.5 487v1M820.5 485v1M821.5 483v2M822.5 482v1M823.5 480v2M824.5 478v2M825.5 477v1M826.5 475v2M827.5 474v1M828.5 472v2M829.5 470v2M830.5 469v1M831.5 467v2M832.5 466v1M833.5 464v2M834.5 462v2M835.5 461v1M880.5 473v1M881.5 471v2M882.5 469v2M883.5 467v2M884.5 465v2M885.5 463v2M886.5 461v2M887.5 459v2M888.5 457v2M889.5 455v2M890.5 453v2M891.5 451v2M892.5 449v2M893.5 447v2M894.5 445v2M895.5 443v2M896.5 442v1M897.5 441v1M898.5 440v1M899.5 439v1M900.5 438v1M901.5 437v1M902.5 435v2M903.5 434v1M904.5 433v1M905.5 432v1M906.5 431v1M907.5 430v1M908.5 429v1M909.5 428v1M924.5 420v1M925.5 421v2M926.5 423v2M927.5 425v1M928.5 426v2M929.5 428v2M930.5 430v1M931.5 431v2M932.5 433v2M933.5 435v1M934.5 436v2M935.5 438v2M936.5 440v1M937.5 441v2M938.5 443v2M939.5 445v2M940.5 447v2M941.5 449v3M942.5 452v2M943.5 454v3M944.5 457v2M945.5 459v3M946.5 462v2M947.5 464v2M948.5 466v3M949.5 469v2M950.5 471v3M951.5 474v2M952.5 476v3M953.5 479v2M954.5 481v2M955.5 483v1M956.5 484v1M957.5 485v1M958.5 486v2M959.5 488v1M960.5 489v1M961.5 490v1M962.5 491v1M963.5 492v1M964.5 493v1M965.5 494v2M966.5 496v1M967.5 497v1M968.5 498v1M969.5 499v1M970.5 500v2M971.5 502v1M972.5 503v1M973.5 504v2M974.5 506v1M975.5 507v1M976.5 508v2M977.5 510v1M978.5 511v1M979.5 512v2M980.5 514v1M981.5 515v1M982.5 516v2M983.5 518v1" fill="none" stroke="#ffffff" stroke-width="1"/>
<rect x="6" y="552" width="1" height="12" fill="#ff0000"/>
<rect x="21" y="556" width="1" height="8" fill="#ff0000"/>
<rect x="36" y="554" width="1" height="10" fill="#00ff00"/>
<rect x="50" y="550" width="1" height="14" fill="#ff0000"/>
<rect x="65" y="552" width="1" height="12" fill="#ff0000"/>
<rect x="80" y="559" width="1" height="5" fill="#ff0000"/>
<rect x="95" y="539" width="1" height="25" fill="#ff0000"/>
<rect x="110" y="528" width="1" height="36" fill="#00ff00"/>
<rect x="125" y="539" width="1" height="25" fill="#ff0000"/>
<rect x="139" y="533" width="1" height="31" fill="#ff0000"/>
<rect x="154" y="555" width="1" height="9" fill="#00ff00"/>
<rect x="169" y="542" width="1" height="22" fill="#00ff00"/>
<rect x="184" y="552" width="1" height="12" fill="#00ff00"/>
<rect x="199" y="549" width="1" height="15" fill="#00ff00"/>
<rect x="213" y="559" width="1" height="5" fill="#ff0000"/>
<rect x="228" y="554" width="1" height="10" fill="#ff0000"/>
<rect x="243" y="547" width="1" height="17" fill="#ff0000"/>
<rect x="258" y="496" width="1" height="68" fill="#ff0000"/>
<rect x="273" y="547" width="1" height="17" fill="#00ff00"/>
<rect x="287" y="469" width="1" height="24" fill="#ffffff"/>
<rect x="287" y="520" width="1" height="44" fill="#ff0000"/>
<rect x="302" y="450" width="1" height="47" fill="#ffffff"/>
<rect x="302" y="527" width="1" height="37" fill="#ff0000"/>
<rect x="317" y="436" width="1" height="80" fill="#ffffff"/>
<rect x="317" y="548" width="1" height="16" fill="#ff0000"/>
<rect x="332" y="427" width="1" height="72" fill="#ffffff"/>
<rect x="332" y="498" width="1" height="66" fill="#ff0000"/>
<rect x="347" y="440" width="1" height="48" fill="#ffffff"/>
<rect x="347" y="487" width="1" height="77" fill="#00ff00"/>
<rect x="361" y="454" width="1" height="54" fill="#ffffff"/>
<rect x="361" y="531" width="1" height="33" fill="#00ff00"/>
<rect x="376" y="474" width="1" height="33" fill="#ffffff"/>
<rect x="376" y="515" width="1" height="49" fill="#00ff00"/>
<rect x="391" y="492" width="1" height="18" fill="#ffffff"/>
<rect x="391" y="542" width="1" height="22" fill="#00ff00"/>
<rect x="406" y="503" width="1" height="8" fill="#ffffff"/>
<rect x="406" y="548" width="1" height="16" fill="#00ff00"/>
<rect x="421" y="530" width="1" height="34" fill="#ff0000"/>
<rect x="435" y="541" width="1" height="23" fill="#00ff00"/>
<rect x="450" y="530" width="1" height="34" fill="#ff0000"/>
<rect x="465" y="505" width="1" height="59" fill="#00ff00"/>
<rect x="480" y="551" width="1" height="13" fill="#00ff00"/>
<rect x="495" y="553" width="1" height="11" fill="#00ff00"/>
<rect x="510" y="556" width="1" height="8" fill="#ff0000"/>
<rect x="524" y="550" width="1" height="14" fill="#00ff00"/>
<rect x="539" y="545" width="1" height="19" fill="#ff0000"/>
<rect x="554" y="545" width="1" height="19" fill="#00ff00"/>
<rect x="569" y="552" width="1" height="12" fill="#00ff00"/>
<rect x="584" y="547" width="1" height="17" fill="#00ff00"/>
<rect x="598" y="539" width="1" height="25" fill="#ff0000"/>
<rect x="613" y="553" width="1" height="11" fill="#ff0000"/>
<rect x="628" y="552" width="1" height="12" fill="#00ff00"/>
<rect x="643" y="554" width="1" height="10" fill="#00ff00"/>
<rect x="658" y="553" width="1" height="11" fill="#ff0000"/>
<rect x="672" y="536" width="1" height="28" fill="#ff0000"/>
<rect x="687" y="547" width="1" height="17" fill="#00ff00"/>
<rect x="702" y="534" width="1" height="30" fill="#ff0000"/>
<rect x="717" y="527" width="1" height="37" fill="#ff0000"/>
<rect x="732" y="549" width="1" height="15" fill="#00ff00"/>
<rect x="746" y="544" width="1" height="20" fill="#ff0000"/>
<rect x="761" y="556" width="1" height="8" fill="#00ff00"/>
<rect x="776" y="519" width="1" height="45" fill="#00ff00"/>
<rect x="791" y="551" width="1" height="13" fill="#ff0000"/>
<rect x="806" y="548" width="1" height="16" fill="#00ff00"/>
<rect x="820" y="537" width="1" height="27" fill="#ff0000"/>
<rect x="835" y="522" width="1" height="42" fill="#ff0000"/>
<rect x="850" y="522" width="1" height="42" fill="#00ff00"/>
<rect x="865" y="552" width="1" height="12" fill="#ff0000"/>
<rect x="880" y="555" width="1" height="9" fill="#00ff00"/>
<rect x="895" y="492" width="1" height="72" fill="#ff0000"/>
<rect x="909" y="557" width="1" height="7" fill="#00ff00"/>
<rect x="924" y="552" width="1" height="12" fill="#ff0000"/>
<rect x="939" y="503" width="1" height="61" fill="#00ff00"/>
<rect x="954" y="506" width="1" height="58" fill="#00ff00"/>
<rect x="969" y="558" width="1" height="6" fill="#ff0000"/>
<rect x="983" y="544" width="1" height="20" fill="#00ff00"/>
<rect x="998" y="560" width="1" height="4" fill="#ff0000"/>
<rect x="1013" y="560" width="1" height="4" fill="#ff0000"/>
<rect x="1028" y="552" width="1" height="12" fill="#ff0000"/>
<rect x="6" y="475" width="1" height="1" fill="#5ac8fa"/>
<rect x="6" y="519" width="1" height="1" fill="#ffff00"/>
<rect x="6" y="552" width="1" height="1" fill="#ffffff"/>
<rect x="21" y="475" width="1" height="1" fill="#5ac8fa"/>
<rect x="21" y="519" width="1" height="1" fill="#ffff00"/>
<rect x="21" y="552" width="1" height="1" fill="#ffffff"/>
<rect x="36" y="475" width="1" height="1" fill="#5ac8fa"/>
<rect x="36" y="519" width="1" height="1" fill="#ffff00"/>
<rect x="36" y="552" width="1" height="1" fill="#ffffff"/>
<rect x="50" y="475" width="1" height="1" fill="#5ac8fa"/>
<rect x="50" y="519" width="1" height="1" fill="#ffff00"/>
<rect x="50" y="552" width="1" height="1" fill="#ffffff"/>
<rect x="65" y="475" width="1" height="1" fill="#5ac8fa"/>
<rect x="65" y="519" width="1" height="1" fill="#ffff00"/>
<rect x="65" y="552" width="1" height="1" fill="#ffffff"/>
<rect x="80" y="475" width="1" height="1" fill="#5ac8fa"/>
<rect x="80" y="519" width="1" height="1" fill="#ffff00"/>
<rect x="80" y="552" width="1" height="1" fill="#ffffff"/>
<rect x="95" y="475" width="1" height="1" fill="#5ac8fa"/>
<rect x="95" y="519" width="1" height="1" fill="#ffff00"/>
<rect x="95" y="552" width="1" height="1" fill="#ffffff"/>
<rect x="110" y="475" width="1" height="1" fill="#5ac8fa"/>
<rect x="110" y="519" width="1" height="1" fill="#ffff00"/>
<rect x="110" y="552" width="1" height="1" fill="#ffffff"/>
<rect x="125" y="475" width="1" height="1" fill="#5ac8fa"/>
<rect x="125" y="519" width="1" height="1" fill="#ffff00"/>
<rect x="125" y="552" width="1" height="1" fill="#ffffff"/>
<rect x="139" y="475" width="1" height="1" fill="#5ac8fa"/>
<rect x="139" y="519" width="1" height="1" fill="#ffff00"/>
<rect x="139" y="552" width="1" height="1" fill="#ffffff"/>
<rect x="154" y="475" width="1" height="1" fill="#5ac8fa"/>
<rect x="154" y="519" width="1" height="1" fill="#ffff00"/>
<rect x="154" y="552" width="1" height="1" fill="#ffffff"/>
<rect x="169" y="475" width="1" height="1" fill="#5ac8fa"/>
<rect x="169" y="519" width="1" height="1" fill="#ffff00"/>
<rect x="169" y="552" width="1" height="1" fill="#ffffff"/>
<rect x="184" y="475" width="1" height="1" fill="#5ac8fa"/>
<rect x="184" y="519" width="1" height="1" fill="#ffff00"/>
<rect x="184" y="552" width="1" height="1" fill="#ffffff"/>
<rect x="199" y="475" width="1" height="1" fill="#5ac8fa"/>
<rect x="199" y="519" width="1" height="1" fill="#ffff00"/>
<rect x="199" y="552" width="1" height="1" fill="#ffffff"/>
<rect x="213" y="475" width="1" height="1" fill="#5ac8fa"/>
<rect x="213" y="519" width="1" height="1" fill="#ffff00"/>
<rect x="213" y="552" width="1" height="1" fill="#ffffff"/>
<rect x="228" y="475" width="1" height="1" fill="#5ac8fa"/>
<rect x="228" y="519" width="1" height="1" fill="#ffff00"/>
<rect x="228" y="552" width="1" height="1" fill="#ffffff"/>
<rect x="243" y="475" width="1" height="1" fill="#5ac8fa"/>
<rect x="243" y="519" width="1" height="1" fill="#ffff00"/>
<rect x="243" y="552" width="1" height="1" fill="#ffffff"/>
<rect x="258" y="475" width="1" height="1" fill="#5ac8fa"/>
<rect x="258" y="519" width="1" height="1" fill="#ffff00"/>
<rect x="258" y="552" width="1" height="1" fill="#ffffff"/>
<rect x="273" y="475" width="1" height="1" fill="#5ac8fa"/>
<rect x="273" y="519" width="1" height="1" fill="#ffff00"/>
<rect x="273" y="552" width="1" height="1" fill="#ffffff"/>
<rect x="287" y="475" width="1" height="1" fill="#5ac8fa"/>
<rect x="287" y="519" width="1" height="1" fill="#ffff00"/>
<rect x="287" y="552" width="1" height="1" fill="#ffffff"/>
<rect x="302" y="475" width="1" height="1" fill="#5ac8fa"/>
<rect x="302" y="519" width="1" height="1" fill="#ffff00"/>
<rect x="302" y="552" width="1" height="1" fill="#ffffff"/>
<rect x="317" y="475" width="1" height="1" fill="#5ac8fa"/>
<rect x="317" y="519" width="1" height="1" fill="#ffff00"/>
<rect x="317" y="552" width="1" height="1" fill="#ffffff"/>
<rect x="332" y="475" width="1" height="1" fill="#5ac8fa"/>
<rect x="332" y="519" width="1" height="1" fill="#ffff00"/>
<rect x="332" y="552" width="1" height="1" fill="#ffffff"/>
<rect x="347" y="475" width="1" height="1" fill="#5ac8fa"/>
<rect x="347" y="519" width="1" height="1" fill="#ffff00"/>
<rect x="347" y="552" width="1" height="1" fill="#ffffff"/>
<rect x="361" y="475" width="1" height="1" fill="#5ac8fa"/>
<rect x="361" y="519" width="1" height="1" fill="#ffff00"/>
<rect x="361" y="552" width="1" height="1" fill="#ffffff"/>
<rect x="376" y="475" width="1" height="1" fill="#5ac8fa"/>
<rect x="376" y="519" width="1" height="1" fill="#ffff00"/>
<rect x="376" y="552" width="1" height="1" fill="#ffffff"/>
<rect x="391" y="475" width="1" height="1" fill="#5ac8fa"/>
<rect x="391" y="519" width="1" height="1" fill="#ffff00"/>
<rect x="391" y="552" width="1" height="1" fill="#ffffff"/>
<rect x="406" y="475" width="1" height="1" fill="#5ac8fa"/>
<rect x="406" y="519" width="1" height="1" fill="#ffff00"/>
<rect x="406" y="552" width="1" height="1" fill="#ffffff"/>
<rect x="421" y="475" width="1" height="1" fill="#5ac8fa"/>
<rect x="421" y="519" width="1" height="1" fill="#ffff00"/>
<rect x="421" y="552" width="1" height="1" fill="#ffffff"/>
<rect x="435" y="475" width="1" height="1" fill="#5ac8fa"/>
<rect x="435" y="519" width="1" height="1" fill="#ffff00"/>
<rect x="435" y="552" width="1" height="1" fill="#ffffff"/>
<rect x="450" y="475" width="1" height="1" fill="#5ac8fa"/>
<rect x="450" y="519" width="1" height="1" fill="#ffff00"/>
<rect x="450" y="552" width="1" height="1" fill="#ffffff"/>
<rect x="465" y="475" width="1" height="1" fill="#5ac8fa"/>
<rect x="465" y="519" width="1" height="1" fill="#ffff00"/>
<rect x="465" y="552" width="1" height="1" fill="#ffffff"/>
<rect x="480" y="475" width="1" height="1" fill="#5ac8fa"/>
<rect x="480" y="519" width="1" height="1" fill="#ffff00"/>
<rect x="480" y="552" width="1" height="1" fill="#ffffff"/>
<rect x="495" y="475" width="1" height="1" fill="#5ac8fa"/>
<rect x="495" y="519" width="1" height="1" fill="#ffff00"/>
<rect x="495" y="552" width="1" height="1" fill="#ffffff"/>
<rect x="510" y="475" width="1" height="1" fill="#5ac8fa"/>
<rect x="510" y="519" width="1" height="1" fill="#ffff00"/>
<rect x="510" y="552" width="1" height="1" fill="#ffffff"/>
<rect x="524" y="475" width="1" height="1" fill="#5ac8fa"/>
<rect x="524" y="519" width="1" height="1" fill="#ffff00"/>
<rect x="524" y="552" width="1" height="1" fill="#ffffff"/>
<rect x="539" y="475" width="1" height="1" fill="#5ac8fa"/>
<rect x="539" y="519" width="1" height="1" fill="#ffff00"/>
<rect x="539" y="552" width="1" height="1" fill="#ffffff"/>
<rect x="554" y="475" width="1" height="1" fill="#5ac8fa"/>
<rect x="554" y="519" width="1" height="1" fill="#ffff00"/>
<rect x="554" y="552" width="1" height="1" fill="#ffffff"/>
<rect x="569" y="475" width="1" height="1" fill="#5ac8fa"/>
<rect x="569" y="519" width="1" height="1" fill="#ffff00"/>
<rect x="569" y="552" width="1" height="1" fill="#ffffff"/>
<rect x="584" y="475" width="1" height="1" fill="#5ac8fa"/>
<rect x="584" y="519" width="1" height="1" fill="#ffff00"/>
<rect x="584" y="552" width="1" height="1" fill="#ffffff"/>
<rect x="598" y="475" width="1" height="1" fill="#5ac8fa"/>
<rect x="598" y="519" width="1" height="1" fill="#ffff00"/>
<rect x="598" y="552" width="1" height="1" fill="#ffffff"/>
<rect x="613" y="475" width="1" height="1" fill="#5ac8fa"/>
<rect x="613" y="519" width="1" height="1" fill="#ffff00"/>
<rect x="613" y="552" width="1" height="1" fill="#ffffff"/>
<rect x="628" y="475" width="1" height="1" fill="#5ac8fa"/>
<rect x="628" y="519" width="1" height="1" fill="#ffff00"/>
<rect x="628" y="552" width="1" height="1" fill="#ffffff"/>
<rect x="643" y="475" width="1" height="1" fill="#5ac8fa"/>
<rect x="643" y="519" width="1" height="1" fill="#ffff00"/>
<rect x="643" y="552" width="1" height="1" fill="#ffffff"/>
<rect x="658" y="475" width="1" height="1" fill="#5ac8fa"/>
<rect x="658" y="519" width="1" height="1" fill="#ffff00"/>
<rect x="658" y="552" width="1" height="1" fill="#ffffff"/>
<rect x="672" y="475" width="1" height="1" fill="#5ac8fa"/>
<rect x="672" y="519" width="1" height="1" fill="#ffff00"/>
<rect x="672" y="552" width="1" height="1" fill="#ffffff"/>
<rect x="687" y="475" width="1" height="1" fill="#5ac8fa"/>
<rect x="687" y="519" width="1" height="1" fill="#ffff00"/>
<rect x="687" y="552" width="1" height="1" fill="#ffffff"/>
<rect x="702" y="475" width="1" height="1" fill="#5ac8fa"/>
<rect x="702" y="519" width="1" height="1" fill="#ffff00"/>
<rect x="702" y="552" width="1" height="1" fill="#ffffff"/>
<rect x="717" y="475" width="1" height="1" fill="#5ac8fa"/>
<rect x="717" y="519" width="1" height="1" fill="#ffff00"/>
<rect x="717" y="552" width="1" height="1" fill="#ffffff"/>
<rect x="732" y="475" width="1" height="1" fill="#5ac8fa"/>
<rect x="732" y="519" width="1" height="1" fill="#ffff00"/>
<rect x="732" y="552" width="1" height="1" fill="#ffffff"/>
<rect x="746" y="475" width="1" height="1" fill="#5ac8fa"/>
<rect x="746" y="519" width="1" height="1" fill="#ffff00"/>
<rect x="746" y="552" width="1" height="1" fill="#ffffff"/>
<rect x="761" y="475" width="1" height="1" fill="#5ac8fa"/>
<rect x="761" y="519" width="1" height="1" fill="#ffff00"/>
<rect x="761" y="552" width="1" height="1" fill="#ffffff"/>
<rect x="776" y="475" width="1" height="1" fill="#5ac8fa"/>
<rect x="776" y="519" width="1" height="1" fill="#ffff00"/>
<rect x="776" y="552" width="1" height="1" fill="#ffffff"/>
<rect x="791" y="475" width="1" height="1" fill="#5ac8fa"/>
<rect x="791" y="519" width="1" height="1" fill="#ffff00"/>
<rect x="791" y="552" width="1" height="1" fill="#ffffff"/>
<rect x="806" y="475" width="1" height="1" fill="#5ac8fa"/>
<rect x="806" y="519" width="1" height="1" fill="#ffff00"/>
<rect x="806" y="552" width="1" height="1" fill="#ffffff"/>
<rect x="820" y="475" width="1" height="1" fill="#5ac8fa"/>
<rect x="820" y="519" width="1" height="1" fill="#ffff00"/>
<rect x="820" y="552" width="1" height="1" fill="#ffffff"/>
<rect x="835" y="475" width="1" height="1" fill="#5ac8fa"/>
<rect x="835" y="519" width="1" height="1" fill="#ffff00"/>
<rect x="835" y="552" width="1" height="1" fill="#ffffff"/>
<rect x="850" y="475" width="1" height="1" fill="#5ac8fa"/>
<rect x="850" y="519" width="1" height="1" fill="#ffff00"/>
<rect x="850" y="552" width="1" height="1" fill="#ffffff"/>
<rect x="865" y="475" width="1" height="1" fill="#5ac8fa"/>
<rect x="865" y="519" width="1" height="1" fill="#ffff00"/>
<rect x="865" y="552" width="1" height="1" fill="#ffffff"/>
<rect x="880" y="475" width="1" height="1" fill="#5ac8fa"/>
<rect x="880" y="519" width="1" height="1" fill="#ffff00"/>
<rect x="880" y="552" width="1" height="1" fill="#ffffff"/>
<rect x="895" y="475" width="1" height="1" fill="#5ac8fa"/>
<rect x="895" y="519" width="1" height="1" fill="#ffff00"/>
<rect x="895" y="552" width="1" height="1" fill="#ffffff"/>
<rect x="909" y="475" width="1" height="1" fill="#5ac8fa"/>
<rect x="909" y="519" width="1" height="1" fill="#ffff00"/>
<rect x="909" y="552" width="1" height="1" fill="#ffffff"/>
<rect x="924" y="475" width="1" height="1" fill="#5ac8fa"/>
<rect x="924" y="519" width="1" height="1" fill="#ffff00"/>
<rect x="924" y="552" width="1" height="1" fill="#ffffff"/>
<rect x="939" y="475" width="1" height="1" fill="#5ac8fa"/>
<rect x="939" y="519" width="1" height="1" fill="#ffff00"/>
<rect x="939" y="552" width="1" height="1" fill="#ffffff"/>
<rect x="954" y="475" width="1" height="1" fill="#5ac8fa"/>
<rect x="954" y="519" width="1" height="1" fill="#ffff00"/>
<rect x="954" y="552" width="1" height="1" fill="#ffffff"/>
<rect x="969" y="475" width="1" height="1" fill="#5ac8fa"/>
<rect x="969" y="519" width="1" height="1" fill="#ffff00"/>
<rect x="969" y="552" width="1" height="1" fill="#ffffff"/>
<rect x="983" y="475" width="1" height="1" fill="#5ac8fa"/>
<rect x="983" y="519" width="1" height="1" fill="#ffff00"/>
<rect x="983" y="552" width="1" height="1" fill="#ffffff"/>
<rect x="998" y="475" width="1" height="1" fill="#5ac8fa"/>
<rect x="998" y="519" width="1" height="1" fill="#ffff00"/>
<rect x="998" y="552" width="1" height="1" fill="#ffffff"/>
<rect x="1013" y="475" width="1" height="1" fill="#5ac8fa"/>
<rect x="1013" y="519" width="1" height="1" fill="#ffff00"/>
<rect x="1013" y="552" width="1" height="1" fill="#ffffff"/>
<rect x="1028" y="475" width="1" height="1" fill="#5ac8fa"/>
<rect x="1028" y="519" width="1" height="1" fill="#ffff00"/>
<rect x="1028" y="552" width="1" height="1" fill="#ffffff"/>
<rect x="6" y="431" width="1022" height="1" fill="#00ff00"/>
<rect x="6" y="563" width="1022" height="1" fill="#00ff00"/>
<rect x="1028" y="431" width="1" height="1" fill="#ff00ff"/>
<rect x="1" y="431" width="1" height="1" fill="#c00000"/>
<path d="M325 318h10l3 3v10h-13z" fill="#8c0000"/>
<text x="331.5" y="329" text-anchor="middle" font-size="12" fill="#fff" class="cj">涨</text>
<path d="M340 318h10l3 3v10h-13z" fill="#a05000"/>
<text x="346.5" y="329" text-anchor="middle" font-size="12" fill="#fff" class="cj">榜</text>
<path d="M710 318h10l3 3v10h-13z" fill="#003080"/>
<text x="716.5" y="329" text-anchor="middle" font-size="12" fill="#fff" class="cj">财</text>
<text x="2.5" y="15.3" fill="#c8c8c8" class="t" textLength="81.5" lengthAdjust="spacingAndGlyphs">电广传媒(日线)</text>
<g shape-rendering="auto"><circle cx="95" cy="11" r="6" fill="#808080"/><path d="M91.8 9.7l3.2 3 3.2-3" fill="none" stroke="#000" stroke-width="1.3"/></g>
<text x="105.5" y="15.3" fill="#ffffff" class="t" textLength="52" lengthAdjust="spacingAndGlyphs">MA5: 5.53</text>
<text x="163.6" y="15.3" fill="#ffff00" class="t" textLength="58.5" lengthAdjust="spacingAndGlyphs">MA10: 5.77</text>
<text x="228.6" y="15.3" fill="#ff00ff" class="t" textLength="58.8" lengthAdjust="spacingAndGlyphs">MA20: 5.80</text>
<text x="293.8" y="15.3" fill="#00ff00" class="t" textLength="56.5" lengthAdjust="spacingAndGlyphs">MA60: 5.91</text>
<text x="359" y="15.3" fill="#c8c8c8" class="t" textLength="65.5" lengthAdjust="spacingAndGlyphs">MA120: 5.66</text>
<text x="431" y="15.3" fill="#0000ff" class="t" textLength="65.5" lengthAdjust="spacingAndGlyphs">MA250: 6.05</text>
<g shape-rendering="auto"><circle cx="8" cy="341" r="6" fill="#808080"/><path d="M4.8 339.7l3.2 3 3.2-3" fill="none" stroke="#000" stroke-width="1.3"/></g>
<text x="17.5" y="345.3" fill="#c8c8c8" class="t" textLength="51.5" lengthAdjust="spacingAndGlyphs">庄见愁NF</text>
<text x="75" y="345.3" fill="#5ac8fa" class="t" textLength="97" lengthAdjust="spacingAndGlyphs">庄筹估算值: 12.98</text>
<text x="177" y="345.3" fill="#ff9a00" class="t" textLength="96.5" lengthAdjust="spacingAndGlyphs">散筹估算值: 47.10</text>
<text x="279" y="345.3" fill="#ffffff" class="t" textLength="72" lengthAdjust="spacingAndGlyphs">获利线: 18.54</text>
<text y="345.3" fill="#ffffff" class="t"><tspan x="357" textLength="24" lengthAdjust="spacingAndGlyphs">博弈</tspan><tspan x="381.2" class="k" textLength="9.3" lengthAdjust="spacingAndGlyphs">K</tspan> <tspan x="393" textLength="52.8" lengthAdjust="spacingAndGlyphs">线长: 5.29</tspan></text>
<text x="453" y="345.3" fill="#ffffff" class="t" textLength="28.5" lengthAdjust="spacingAndGlyphs">: 5.00</text>
<text x="488" y="345.3" fill="#ffff00" class="t" textLength="35.2" lengthAdjust="spacingAndGlyphs">: 20.00</text>
<text x="529.4" y="345.3" fill="#5ac8fa" class="t" textLength="35.5" lengthAdjust="spacingAndGlyphs">: 40.00</text>
<text x="571.6" y="345.3" fill="#ff00ff" class="t" textLength="35.8" lengthAdjust="spacingAndGlyphs">: 60.00</text>
<text x="614" y="345.3" fill="#00ff00" class="t" textLength="46" lengthAdjust="spacingAndGlyphs">CC: 0.00</text>
<text x="667" y="345.3" fill="#00ff00" class="t" textLength="35.6" lengthAdjust="spacingAndGlyphs">: 60.00</text>
<text x="288" y="413.5" fill="#00ff00" class="t" textLength="22.5" lengthAdjust="spacingAndGlyphs">上升</text>
</svg>
</body>
</html>
